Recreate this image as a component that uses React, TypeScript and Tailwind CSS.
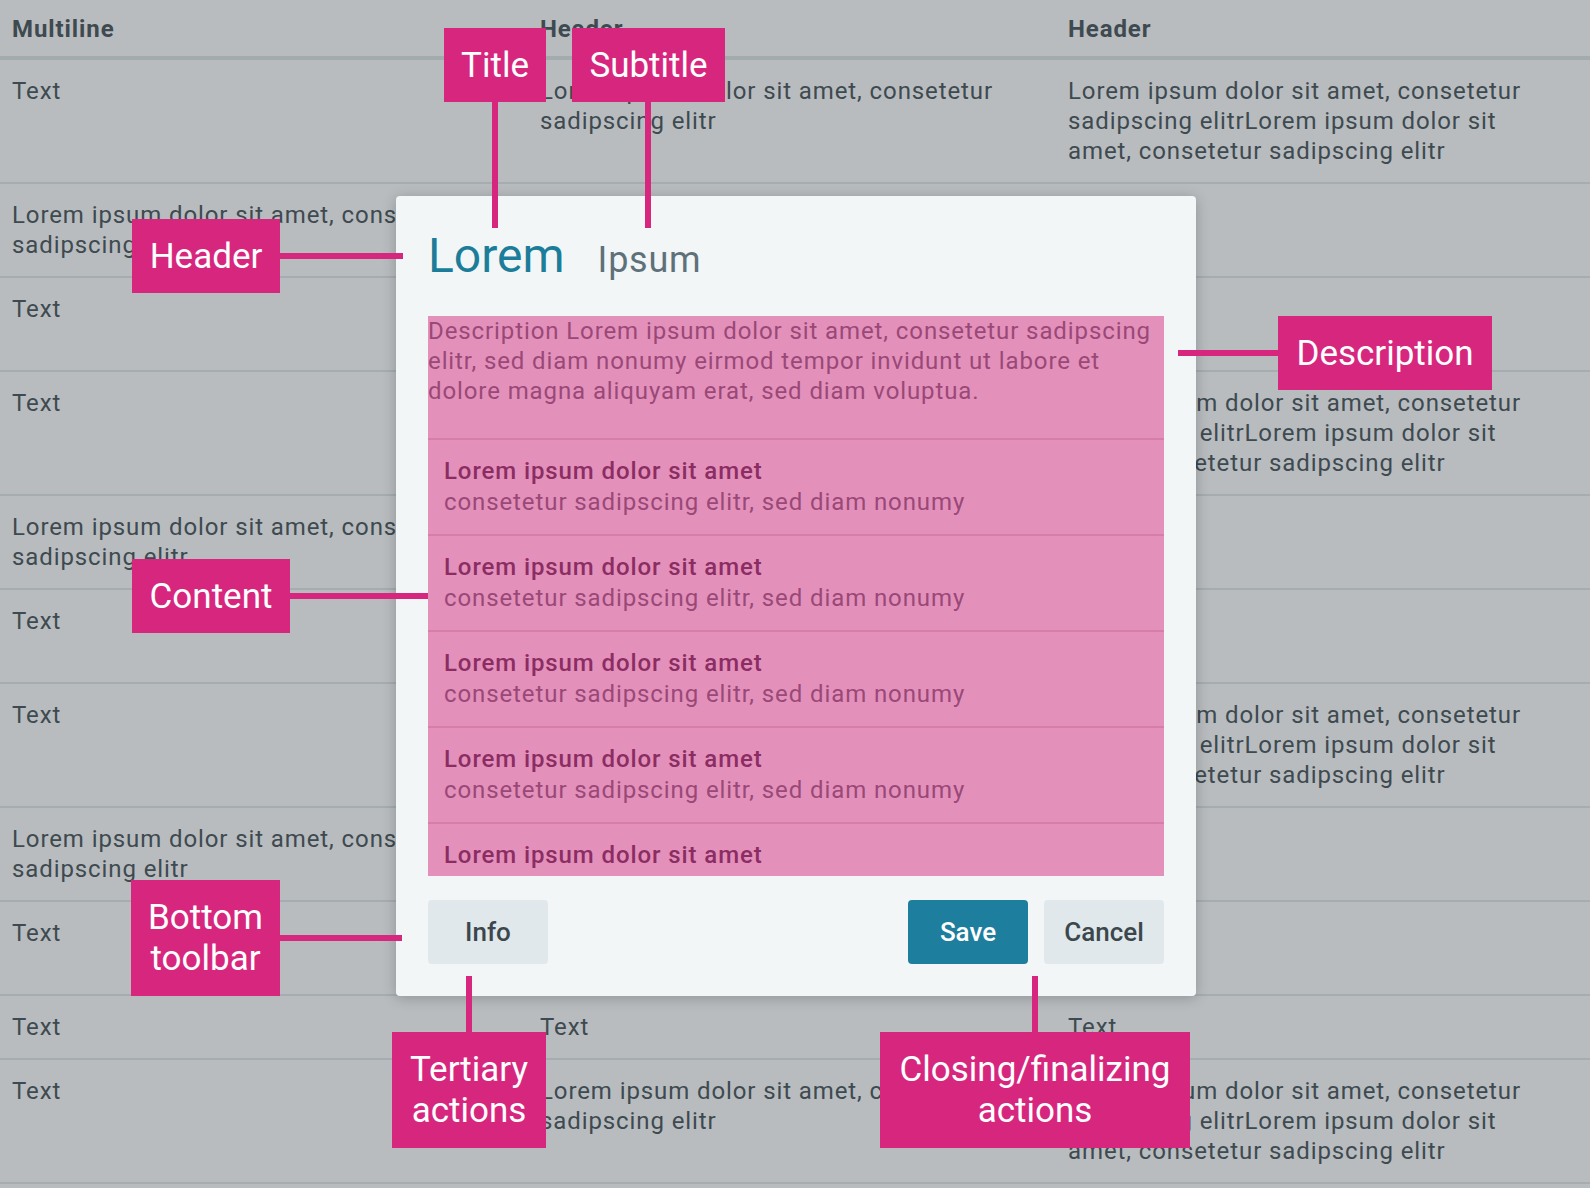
const T = "Text";
const L2 = "Lorem ipsum dolor sit amet, consetetur sadipscing elitr";
const L3 =
  "Lorem ipsum dolor sit amet, consetetur sadipscing elitrLorem ipsum dolor sit amet, consetetur sadipscing elitr";

const rows: string[][] = [
  [T, L2, L3],
  [L2, T, T],
  [T, L2, T],
  [T, L2, L3],
  [L2, T, T],
  [T, L2, T],
  [T, L2, L3],
  [L2, T, T],
  [T, L2, T],
  [T, T, T],
  [T, L2, L3],
];

const items = [1, 2, 3, 4, 5];

function Table() {
  return (
    <div className="grid grid-cols-[528px_528px_1fr] text-[24px] leading-[30px] tracking-[0.9px] text-[#3e4a50]">
      {["Multiline", "Header", "Header"].map((h, i) => (
        <div key={i} className="border-b-4 border-[#a2abae] pb-[12px] pl-3 pt-[14px] font-bold">
          {h}
        </div>
      ))}
      {rows.map((row, r) =>
        row.map((cell, c) => (
          <div key={`${r}-${c}`} className="border-b-2 border-[#a5adb0] py-4 pl-3">
            <p className="max-w-[480px]">{cell}</p>
          </div>
        )),
      )}
    </div>
  );
}

function Modal() {
  return (
    <div className="absolute left-[396px] top-[196px] flex h-[800px] w-[800px] flex-col rounded-[4px] bg-[#f2f6f7] p-8 shadow-[0_2px_14px_rgba(0,0,0,0.22)]">
      <div className="flex h-14 items-baseline gap-[33px]">
        <h2 className="text-[48px] leading-[56px] text-[#1c7d9a]">Lorem</h2>
        <span className="text-[36px] leading-[56px] tracking-[0.75px] text-[#5e7179]">Ipsum</span>
      </div>

      <div className="mt-8 h-[560px] overflow-hidden bg-[#e391bb] text-[24px] tracking-[0.9px]">
        <p className="border-b-2 border-[#d67daa] pb-8 leading-[30px] text-[#9a4877]">
          Description Lorem ipsum dolor sit amet, consetetur sadipscing elitr, sed diam nonumy eirmod
          tempor invidunt ut labore et dolore magna aliquyam erat, sed diam voluptua.
        </p>
        {items.map((i) => (
          <div key={i} className="border-b-2 border-[#d67daa] px-4 py-4 leading-[31px]">
            <p className="font-medium text-[#8b2d62]">Lorem ipsum dolor sit amet</p>
            <p className="text-[#9a4877]">consetetur sadipscing elitr, sed diam nonumy</p>
          </div>
        ))}
      </div>

      <div className="mt-6 flex gap-4 text-[26px] font-medium">
        <button className="h-16 w-[120px] rounded-[4px] bg-[#e0e8eb] text-[#3b474c]">Info</button>
        <div className="flex-1" />
        <button className="h-16 w-[120px] rounded-[4px] bg-[#1e7e9d] text-white">Save</button>
        <button className="h-16 w-[120px] rounded-[4px] bg-[#e0e8eb] text-[#3b474c]">Cancel</button>
      </div>
    </div>
  );
}

function Annotations() {
  const box =
    "absolute flex flex-col items-center justify-center bg-[#d7267e] text-center text-[35px] leading-[41px] text-white";
  const line = "absolute bg-[#d7267e]";
  return (
    <>
      {/* connector lines */}
      <div className={line + " left-[492px] top-[100px] h-[128px] w-[6px]"} />
      <div className={line + " left-[645px] top-[100px] h-[128px] w-[6px]"} />
      <div className={line + " left-[278px] top-[253px] h-[6px] w-[125px]"} />
      <div className={line + " left-[1178px] top-[350px] h-[6px] w-[102px]"} />
      <div className={line + " left-[288px] top-[593px] h-[6px] w-[140px]"} />
      <div className={line + " left-[278px] top-[935px] h-[6px] w-[124px]"} />
      <div className={line + " left-[466px] top-[976px] h-[58px] w-[6px]"} />
      <div className={line + " left-[1032px] top-[976px] h-[58px] w-[6px]"} />

      {/* labels */}
      <div className={box + " left-[444px] top-[28px] h-[74px] w-[102px]"}>Title</div>
      <div className={box + " left-[572px] top-[28px] h-[74px] w-[153px]"}>Subtitle</div>
      <div className={box + " left-[132px] top-[219px] h-[74px] w-[148px]"}>Header</div>
      <div className={box + " left-[1278px] top-[316px] h-[74px] w-[214px]"}>Description</div>
      <div className={box + " left-[132px] top-[559px] h-[74px] w-[158px]"}>Content</div>
      <div className={box + " left-[131px] top-[880px] h-[116px] w-[149px]"}>
        <span>Bottom</span>
        <span>toolbar</span>
      </div>
      <div className={box + " left-[392px] top-[1032px] h-[116px] w-[154px]"}>
        <span>Tertiary</span>
        <span>actions</span>
      </div>
      <div className={box + " left-[880px] top-[1032px] h-[116px] w-[310px]"}>
        <span>Closing/finalizing</span>
        <span>actions</span>
      </div>
    </>
  );
}

export default function App() {
  return (
    <div className="relative h-[1188px] w-[1590px] overflow-hidden bg-[#b8bcbf] font-[Roboto,sans-serif]">
      <Table />
      <Modal />
      <Annotations />
    </div>
  );
}
